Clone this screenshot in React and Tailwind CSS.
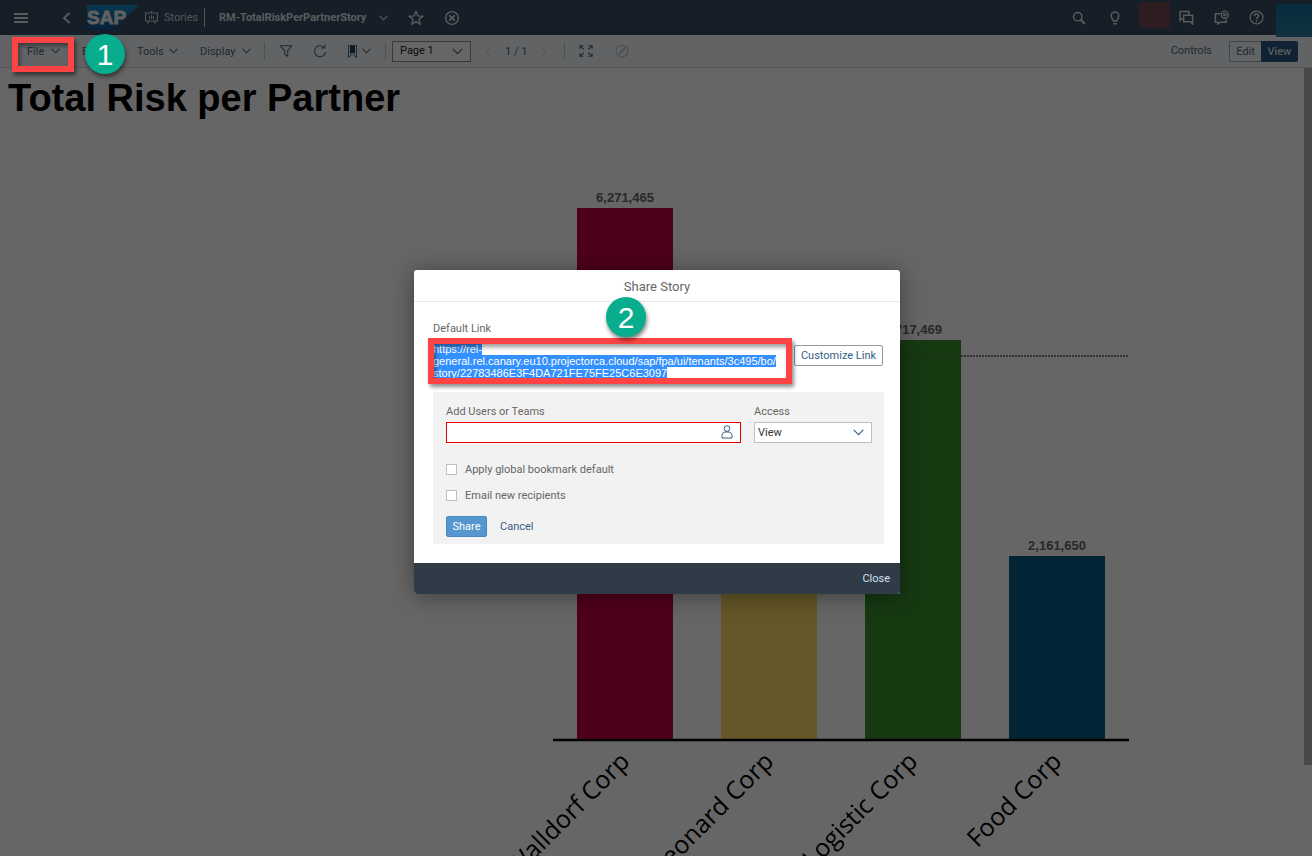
import React from 'react';

const bars = [
  { name: 'Walldorf Corp', value: '6,271,465', x: 577, top: 208, fill: '#c50047' },
  { name: 'Leonard Corp', value: '4,325,110', x: 721, top: 332, fill: '#ffda65' },
  { name: 'Logistic Corp', value: '4,717,469', x: 865, top: 340, fill: '#388f2e' },
  { name: 'Food Corp', value: '2,161,650', x: 1009, top: 556, fill: '#075d86' },
];

function Icon({ size = 14, children, className = '' }) {
  return (
    <svg width={size} height={size} viewBox="0 0 16 16" fill="none" stroke="currentColor" strokeWidth="1.4" className={'shrink-0 ' + className} aria-hidden="true">
      {children}
    </svg>
  );
}

const Chevron = ({ className = '' }) => (
  <svg width="9" height="6" viewBox="0 0 9 6" fill="none" stroke="currentColor" strokeWidth="1.1" className={'shrink-0 ' + className} aria-hidden="true">
    <path d="M.6.8 4.5 4.8 8.4.8" />
  </svg>
);

const WideChevron = ({ className = '' }) => (
  <svg width="11" height="7" viewBox="0 0 11 7" fill="none" stroke="currentColor" strokeWidth="1.1" className={'shrink-0 ' + className} aria-hidden="true">
    <path d="M.7.9 5.500 5.700 10.300.9" />
  </svg>
);

function SapLogo() {
  return (
    <svg width="52" height="26" viewBox="0 0 52 26" role="img" aria-label="SAP">
      <defs>
        <linearGradient id="sap" x1="0" y1="0" x2="0" y2="1">
          <stop offset="0" stopColor="#0f8fc8" />
          <stop offset="1" stopColor="#12508f" />
        </linearGradient>
      </defs>
      <path d="M0 0h52L26 25H0z" fill="url(#sap)" />
      <text x="0" y="19" fontSize="19" fontWeight="700" fontFamily="Liberation Sans, sans-serif" fill="#f0f0f0" stroke="#f0f0f0" strokeWidth=".8">SAP</text>
    </svg>
  );
}

function TopBar() {
  return (
    <header className="flex h-[35px] items-center bg-[#384d62] text-[#dde5ed]">
      <button aria-label="Menu" className="ml-[14px]">
        <svg width="14" height="12" viewBox="0 0 14 12" stroke="currentColor" strokeWidth="1.8"><path d="M0 2h14M0 6h14M0 10h14" /></svg>
      </button>
      <button aria-label="Back" className="ml-[34px]">
        <svg width="9" height="12" viewBox="0 0 9 12" fill="none" stroke="currentColor" strokeWidth="1.8"><path d="M7.5 1 2 6l5.500 5" /></svg>
      </button>
      <a href="#home" aria-label="Home" className="ml-4"><SapLogo /></a>
      <a href="#stories" className="ml-1.5 flex h-[19px] w-[60px] items-center gap-1.5 whitespace-nowrap border-r border-[#c5ced8] text-[11px] text-[#cdd6df]">
        <svg width="13" height="13" viewBox="0 0 13 13" fill="none" stroke="currentColor" strokeWidth="1.1" className="shrink-0" aria-hidden="true">
          <path d="M.6 2h11.800v8H.6zM6.500 0v2M4 10l-1.500 2.700M9 10l1.500 2.700M4.500 5.500V8M6.500 4v4M8.500 5v3" />
        </svg>
        <span className="pt-0.5">Stories</span>
      </a>
      <button className="ml-[14px] flex w-[169px] items-center justify-between whitespace-nowrap pt-px text-[11px] font-bold">
        RM-TotalRiskPerPartnerStory
        <Chevron />
      </button>
      <button aria-label="Favorite" className="ml-5">
        <Icon size={16}><path d="m8 1.500 1.900 4.400 4.700.4-3.600 3.100 1.100 4.700L8 11.600l-4.100 2.500L5 9.400 1.400 6.300l4.700-.4z" /></Icon>
      </button>
      <button aria-label="Close story" className="ml-5">
        <Icon size={16}><circle cx="8" cy="8" r="6.400" /><path d="m5.300 5.300 5.400 5.400m0-5.400-5.400 5.400" strokeWidth="1.800" /></Icon>
      </button>
      <div className="ml-auto flex h-full items-center">
        <button aria-label="Search"><Icon><circle cx="6.500" cy="6.500" r="4.800" strokeWidth="1.600" /><path d="m10 10 4.500 4.500" strokeWidth="2.400" /></Icon></button>
        <button aria-label="Insights" className="ml-[22px]"><Icon><path d="M6 11.500C6 9.500 3.600 8.500 3.600 5.500a4.400 4.400 0 0 1 8.800 0c0 3-2.400 4-2.400 6zM6 14.500h4" strokeWidth="1.600" /></Icon></button>
        <span className="mb-[5px] ml-[17px] h-[26px] w-[31px] bg-[#704852]" />
        <button aria-label="Discussions" className="ml-[9px]"><Icon size={15}><path d="M4.500 9.500H3L1.200 11V1.500h9.300V5M5 5.500h9.500v9.500l-2.200-2.500H5z" strokeWidth="1.600" /></Icon></button>
        <button aria-label="Feedback" className="ml-5"><Icon size={15}><path d="M6.500 4H1.500v9H4v2l2.500-2H13v-3" strokeWidth="1.600" /><circle cx="11.500" cy="5" r="3.800" /><path d="M9.500 4h4M9.500 6h4" /></Icon></button>
        <button aria-label="Help" className="ml-5"><Icon size={15}><circle cx="8" cy="8" r="6.800" /><path d="M5.800 6.300c0-3 4.400-2.800 4.400-.1C10.200 8 8 7.800 8 9.800M8 11v1.500" strokeWidth="1.600" /></Icon></button>
        <span className="relative z-10 ml-3 mt-1 h-[33px] w-9 self-start bg-linear-to-b from-[#0f7199] to-[#2a7c9e]" />
      </div>
    </header>
  );
}

function MenuButton({ children, className }) {
  return <button className={'flex items-center justify-between ' + className}><span className="pt-0.5">{children}</span><Chevron /></button>;
}

function Toolbar() {
  return (
    <div className="flex h-[33px] items-center border-b border-[#d5dce3] bg-[#f5f8fb] text-[11px] text-[#51657a]">
      <MenuButton className="ml-[27px] w-[33px]">File</MenuButton>
      <MenuButton className="ml-[22px] w-[35px]">Edit</MenuButton>
      <MenuButton className="ml-5 w-[41px]">Tools</MenuButton>
      <MenuButton className="ml-[22px] w-[51px]">Display</MenuButton>
      <span className="ml-[13px] h-[18px] w-px bg-[#c4cad0]" />
      <button aria-label="Filter" className="ml-[14px]"><Icon><path d="M1.500 2h13L10 7.500V14l-3.500-2V7.500z" strokeWidth="1.200" /></Icon></button>
      <button aria-label="Refresh" className="ml-5"><Icon><path d="M12.500 3.800A6.300 6.300 0 1 0 14.300 9M13.500.5v4H9.500" strokeWidth="1.200" /></Icon></button>
      <button aria-label="Bookmarks" className="ml-[21px] flex items-center gap-[5px]">
        <svg width="9" height="13" viewBox="0 0 9 13" aria-hidden="true"><path d="M.5.500h8v12L4.500 9l-4 3.500z" fill="none" stroke="currentColor" /><path d="M2 1h5v8L4.500 7.500 2 9z" fill="#15406a" /></svg>
        <Chevron />
      </button>
      <span className="ml-[14px] h-[18px] w-px bg-[#c4cad0]" />
      <div className="relative ml-1.5 h-[21px] w-[79px]">
        <select aria-label="Page" className="h-full w-full appearance-none border border-[#89919a] bg-white pl-[7px] pt-px text-[11px] text-[#222]"><option>Page 1</option></select>
        <WideChevron className="pointer-events-none absolute right-2 top-[7px]" />
      </div>
      <button aria-label="Previous page" className="ml-[14px] text-[#c3c9cf]"><svg width="6" height="9" viewBox="0 0 6 9" fill="none" stroke="currentColor"><path d="m5 .5-4 4 4 4" /></svg></button>
      <span className="ml-[14px] w-[22px] whitespace-nowrap pt-0.5 text-[11px]">1 / 1</span>
      <button aria-label="Next page" className="ml-[14px] text-[#c3c9cf]"><svg width="6" height="9" viewBox="0 0 6 9" fill="none" stroke="currentColor"><path d="m1 .5 4 4-4 4" /></svg></button>
      <span className="ml-[17px] h-[18px] w-px bg-[#c4cad0]" />
      <button aria-label="Fullscreen" className="ml-[14px]"><Icon><path d="M1 5.500V2h4M1.500 2.500l4 3.500M15 5.500V2h-4M14.500 2.500l-4 3.500M1 10.500V14h4M1.500 13.500l4-3.500M15 10.500V14h-4M14.500 13.500l-4-3.500" strokeWidth="1.300" /></Icon></button>
      <button aria-label="Explorer" className="ml-[22px] text-[#c3c9cf]"><Icon><circle cx="8" cy="8" r="6.800" /><path d="M11.500 4.500 9 9l-4.500 2.500L7 7z" /></Icon></button>
      <button className="ml-auto">Controls</button>
      <div className="ml-[17px] mr-[14px] flex h-[21px] w-[69px]">
        <button className="flex-1 rounded-l-[2px] border border-r-0 border-[#a5adb6] pt-0.5">Edit</button>
        <button className="w-[37px] rounded-r-[2px] bg-[#285580] pt-0.5 text-white">View</button>
      </div>
    </div>
  );
}

function Chart() {
  return (
    <svg viewBox="480 120 700 736" className="absolute left-[480px] top-[120px] h-[736px] w-[700px]" role="img" aria-label="Total risk by partner">
      <path d="M553 356h575" stroke="#7c7c7c" strokeWidth="2" strokeDasharray="2 1" />
      {bars.map((b) => (
        <g key={b.name}>
          <rect x={b.x} y={b.top} width="96" height={739 - b.top} fill={b.fill} />
          <text x={b.x + 48} y={b.top - 6} textAnchor="middle" fontSize="13" fontWeight="700" fontFamily="Liberation Sans, sans-serif" fill="#666">{b.value}</text>
          <text transform={`translate(${b.x + 54} 763) rotate(-45)`} textAnchor="end" fontSize="25" fontFamily="Open Sans, sans-serif" fill="#000">{b.name}</text>
        </g>
      ))}
      <path d="M865 356h96" stroke="#47683f" strokeWidth="1" strokeDasharray="2 1" />
      <path d="M553 740h576" stroke="#000" strokeWidth="2.500" />
    </svg>
  );
}

function Badge({ children, className }) {
  return (
    <span className={'absolute flex size-10 items-center justify-center rounded-full bg-[#08ad8d] pt-px text-[30px] leading-none text-white shadow-[1px_3px_4px_rgba(0,0,0,0.5)] [font-family:"Liberation_Sans",sans-serif] ' + className}>
      {children}
    </span>
  );
}

function ShareDialog() {
  return (
    <section role="dialog" aria-label="Share Story" className="relative w-[486px] rounded-[3px] bg-white text-[11px] text-[#666] shadow-[0_2px_24px_rgba(0,0,0,0.4)]">
      <h2 className="flex h-8 items-center justify-center border-b border-[#e8e8e8] pt-0.5 text-[13px]">Share Story</h2>
      <div className="pb-[19px] pl-[19px] pr-4 pt-5">
        <p className="leading-[14px]">Default Link</p>
        <div className="mt-[7px] flex h-[49px] items-start">
          <p className="w-[355px] shrink-0 whitespace-nowrap text-[11px] leading-3 text-white [font-family:'Liberation_Sans',sans-serif]">
            <span className="bg-[#3390ff]">https://rel-<br />general.rel.canary.eu10.projectorca.cloud/sap/fpa/ui/tenants/3c495/bo/<br />story/22783486E3F4DA721FE75FE25C6E3097</span>
          </p>
          <button className="ml-auto mr-px mt-0.5 h-[21px] w-[89px] whitespace-nowrap rounded-[2px] border border-[#999] pt-px text-[11px] text-[#346187]">Customize Link</button>
        </div>
        <form className="bg-[#f2f2f2] pb-[7px] pl-[13px] pr-3 pt-[13px]" onSubmit={(e) => e.preventDefault()}>
          <div className="flex gap-[13px]">
            <div className="flex-1">
              <label htmlFor="users" className="block leading-[14px]">Add Users or Teams</label>
              <div className="relative mt-[3px]">
                <input id="users" className="block h-[21px] w-full border border-[#e60000] bg-white px-1 outline-none" />
                <svg width="12" height="14" viewBox="0 0 12 14" fill="none" stroke="#346187" className="pointer-events-none absolute right-2 top-[3px]"><circle cx="6" cy="3.500" r="2.800" /><path d="M1 13V10.500C1 8.500 2.500 7 4 7h4c1.500 0 3 1.500 3 3.500V13z" /></svg>
              </div>
            </div>
            <div className="w-[118px]">
              <label htmlFor="access" className="block leading-[14px]">Access</label>
              <div className="relative mt-[3px] text-[#346187]">
                <select id="access" className="block h-[21px] w-full appearance-none border border-[#bfbfbf] bg-white pl-[3px] pt-px text-[#333]"><option>View</option></select>
                <WideChevron className="pointer-events-none absolute right-2 top-[7px]" />
              </div>
            </div>
          </div>
          <label className="mt-[19px] flex h-[14px] items-center gap-2"><input type="checkbox" className="size-[11px] appearance-none border border-[#bfbfbf] bg-white" /><span className="pt-0.5">Apply global bookmark default</span></label>
          <label className="mt-3 flex h-[14px] items-center gap-2"><input type="checkbox" className="size-[11px] appearance-none border border-[#bfbfbf] bg-white" /><span className="pt-0.5">Email new recipients</span></label>
          <div className="mt-[14px] flex items-center gap-[13px]">
            <button className="h-[21px] w-[41px] rounded-[2px] border border-[#418ac9] bg-[#5496cd] pt-px text-white">Share</button>
            <button type="button" className="pt-px text-[#346187]">Cancel</button>
          </div>
        </form>
      </div>
      <footer className="flex h-[31px] items-center justify-end rounded-b-[3px] bg-[#2f3c48] pr-[10px] pt-0.5 text-[#d1e0ee]"><button>Close</button></footer>
      <div className="pointer-events-none absolute left-[14px] top-[68px] h-[46px] w-[364px] border-6 border-[#fd4343] shadow-[2px_3px_4px_rgba(0,0,0,0.45),inset_2px_3px_4px_rgba(0,0,0,0.4)]" />
      <Badge className="left-[192px] top-[27px]">2</Badge>
    </section>
  );
}

export default function App() {
  return (
    <div className="relative min-h-screen overflow-hidden bg-white [font-family:Roboto,sans-serif]">
      <TopBar />
      <Toolbar />
      <main>
        <h1 className="pl-2 pt-2 text-[38px] font-bold leading-[44px] text-black [font-family:'Liberation_Sans',sans-serif]">Total Risk per Partner</h1>
        <Chart />
      </main>
      <div className="absolute right-0 top-[68px] h-[697px] w-2 bg-[#b5b5b5]" />
      <div className="absolute inset-0 z-20 flex items-start justify-center bg-black/60 pl-0.5 pt-[270px]">
        <ShareDialog />
        <div className="pointer-events-none absolute left-3 top-[37px] h-[35px] w-[62px] border-6 border-[#fd4343] shadow-[2px_3px_4px_rgba(0,0,0,0.5),inset_2px_3px_4px_rgba(0,0,0,0.4)]" />
        <Badge className="left-[85px] top-[34px]">1</Badge>
      </div>
    </div>
  );
}
